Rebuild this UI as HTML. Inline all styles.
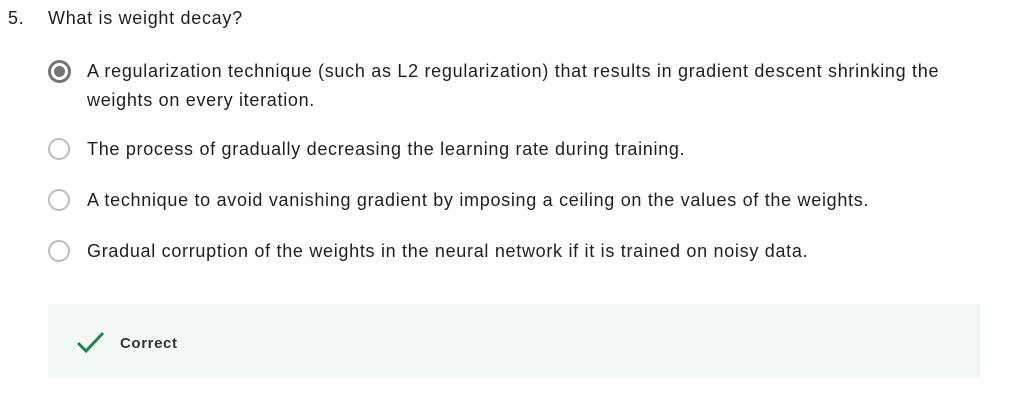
<!DOCTYPE html>
<html><head><style>
body{margin:0;width:1012px;height:400px;background:#fff;font-family:"Liberation Sans",sans-serif;color:#1f1f1f;position:relative;overflow:hidden}
.t{position:absolute;font-size:18px;letter-spacing:0.7px;white-space:nowrap}
.r{position:absolute;left:48px;width:18px;height:18px;border:2px solid #bdbdbd;border-radius:50%}
.r.s{border:3px solid #757575;width:17px;height:17px}
.r.s:after{content:"";position:absolute;left:3px;top:3px;width:11px;height:11px;border-radius:50%;background:#757575}
.box{position:absolute;left:48px;top:304px;width:933px;height:74px;background:#f3f8f6}
</style></head><body>
<div class="t" style="left:8px;top:8px">5.</div>
<div class="t" style="left:48px;top:8px">What is weight decay?</div>
<div class="r s" style="top:60px"></div>
<div class="t" style="left:87px;top:57px;line-height:29px">A regularization technique (such as L2 regularization) that results in gradient descent shrinking the<br>weights on every iteration.</div>
<div class="r" style="top:138px"></div>
<div class="t" style="left:87px;top:139px">The process of gradually decreasing the learning rate during training.</div>
<div class="r" style="top:189px"></div>
<div class="t" style="left:87px;top:190px">A technique to avoid vanishing gradient by imposing a ceiling on the values of the weights.</div>
<div class="r" style="top:240px"></div>
<div class="t" style="left:87px;top:241px">Gradual corruption of the weights in the neural network if it is trained on noisy data.</div>
<div class="box"></div>
<svg style="position:absolute;left:76px;top:330px" width="30" height="24"><path d="M2 13 L10 21 L27 3" fill="none" stroke="#1f8354" stroke-width="3"/></svg>
<div class="t" style="left:120px;top:335px;font-size:15px;letter-spacing:0.6px;font-weight:bold;color:#333">Correct</div>
</body></html>
